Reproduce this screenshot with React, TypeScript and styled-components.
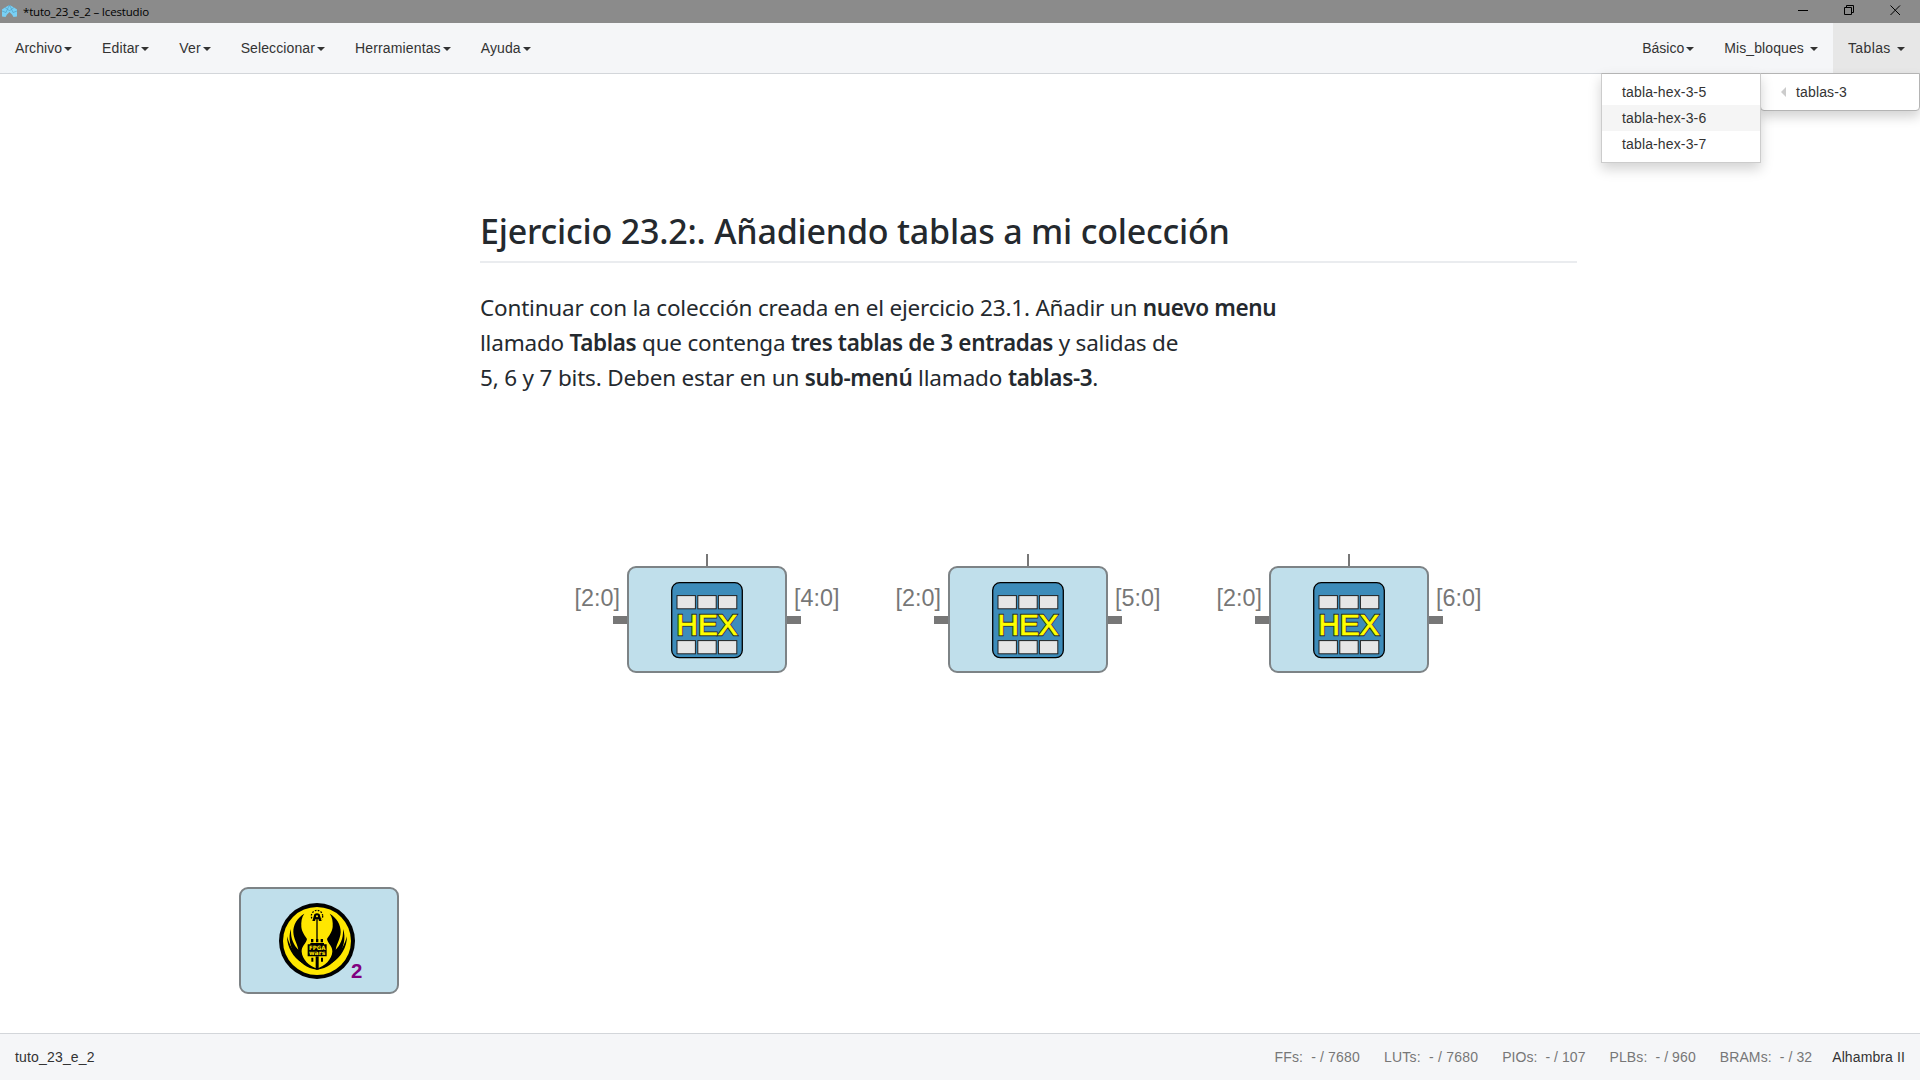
import React from "react";
import styled, { createGlobalStyle, css } from "styled-components";

const Global = createGlobalStyle`
  * { box-sizing: border-box; }
  html, body { margin: 0; padding: 0; background: #fff; overflow: hidden; }
  body { font: 14px/20px "Liberation Sans", Arial, sans-serif; color: #333; }
`;

const Window = styled.div`
  width: 1920px;
  height: 1080px;
  display: flex;
  flex-direction: column;
  background: #fff;
`;

const TitleBar = styled.header`
  flex: 0 0 23px;
  display: flex;
  align-items: center;
  background: #8b8b8b;
  color: #000;
  padding-left: 2px;
`;

const Title = styled.span`
  font: 11.5px/22px "Open Sans", "Noto Sans", sans-serif;
  letter-spacing: -0.18px;
  margin-left: 6px;
  flex: 1;
`;

const WindowButtons = styled.div`
  display: flex;
  margin-right: 2px;
`;

const WindowButton = styled.span`
  width: 46px;
  height: 23px;
  display: flex;
  svg { display: block; margin: 5px auto 0; }
`;

const NavBar = styled.nav`
  flex: 0 0 51px;
  display: flex;
  justify-content: space-between;
  background: #f5f6f8;
  border-bottom: 1px solid #d3d6da;
`;

const MenuGroup = styled.div`
  display: flex;
`;

const MenuItem = styled.div<{ $open?: boolean; $tracking?: number }>`
  position: relative;
  padding: 15px;
  height: 50px;
  white-space: pre;
  letter-spacing: ${(p) => p.$tracking ?? 0}px;
  ${(p) => p.$open && css`background: #e7e7e7;`}
`;

const Caret = styled.i`
  display: inline-block;
  margin-left: 2px;
  vertical-align: middle;
  border-top: 4px solid #333;
  border-left: 4px solid transparent;
  border-right: 4px solid transparent;
`;

const Dropdown = styled.div<{ $sub?: boolean }>`
  position: absolute;
  z-index: 5;
  top: ${(p) => (p.$sub ? "-1px" : "50px")};
  right: ${(p) => (p.$sub ? "158px" : "0")};
  width: 160px;
  padding: 5px 0;
  background: #fff;
  letter-spacing: 0.14px;
  border: 1px solid ${(p) => (p.$sub ? "#ccc" : "#b4b4b4")};
  border-top-color: #b4b4b4;
  border-radius: ${(p) => (p.$sub ? "0" : "0 0 4px 4px")};
  box-shadow: 0 6px 12px rgba(0, 0, 0, 0.175);
`;

const DropdownRow = styled.div<{ $hover?: boolean }>`
  padding: 3px 20px;
  display: flex;
  align-items: center;
  background: ${(p) => (p.$hover ? "#f5f5f5" : "transparent")};
`;

const LeftArrow = styled.i`
  margin-right: 10px;
  border-right: 5px solid #ccc;
  border-top: 5px solid transparent;
  border-bottom: 5px solid transparent;
`;

const Canvas = styled.main`
  flex: 1;
  position: relative;
`;

const Note = styled.article`
  position: absolute;
  left: 480px;
  top: 132px;
  width: 1097px;
  color: #24292e;
  font-family: "Noto Sans", "Open Sans", sans-serif;
`;

const Heading = styled.h2`
  margin: 0 0 27px;
  height: 57px;
  border-bottom: 2px solid #eaecef;
  font-size: 34px;
  font-weight: 540;
  line-height: 50px;
  white-space: nowrap;
`;

const Line = styled.p`
  margin: 0;
  font-size: 22.5px;
  line-height: 35px;
  white-space: nowrap;
`;

const Fit = styled.span<{ $spacing: number }>`
  letter-spacing: ${(p) => p.$spacing}px;
  b { font-weight: 600; letter-spacing: ${(p) => p.$spacing - 0.15}px; }
`;

const Node = styled.div<{ $x: number; $y: number }>`
  position: absolute;
  left: ${(p) => p.$x}px;
  top: ${(p) => p.$y}px;
  width: 160px;
  height: 107px;
  display: flex;
  align-items: center;
  justify-content: center;
  background: #c0dfeb;
  border: 2px solid #7d8386;
  border-radius: 9px;
`;

const TopPin = styled.i`
  position: absolute;
  left: 77px;
  top: -14px;
  width: 2px;
  height: 12px;
  background: #777;
`;

const Wire = styled.i<{ $side: "left" | "right" }>`
  position: absolute;
  ${(p) => p.$side}: -16px;
  top: 48px;
  width: 14px;
  height: 8px;
  background: #777;
`;

const PortLabel = styled.span<{ $side: "left" | "right" }>`
  position: absolute;
  ${(p) => (p.$side === "left" ? "right: 165px" : "left: 165px")};
  top: 16px;
  font-size: 23.33px;
  line-height: 28px;
  color: #777;
`;

const IconArt = styled.div<{ $right?: number; $top?: number }>`
  display: flex;
  margin-right: ${(p) => p.$right ?? 0}px;
  margin-top: ${(p) => p.$top ?? 0}px;
`;

const Count = styled.span`
  position: absolute;
  left: 110px;
  top: 70px;
  font-size: 20.4px;
  font-weight: bold;
  line-height: 24px;
  color: #800080;
`;

const StatusBar = styled.footer`
  flex: 0 0 47px;
  display: flex;
  align-items: center;
  justify-content: space-between;
  padding: 0 15px;
  background: #f5f6f8;
  border-top: 1px solid #d3d6da;
`;

const FileName = styled.span`
  letter-spacing: 0.17px;
`;

const Stats = styled.div`
  display: flex;
  letter-spacing: 0.11px;
`;

const Stat = styled.span<{ $tracking: number }>`
  margin-right: 24px;
  color: #777;
  white-space: pre;
  letter-spacing: ${(p) => p.$tracking}px;
  &:last-of-type { margin-right: 20px; }
`;

const Board = styled.strong`
  font-weight: normal;
`;

const AppIcon = () => (
  <svg width="15" height="13" viewBox="0 0 15 13">
    <path d="M0 4.5 3 2.5 7.5 0 12 2.5 15 4.5V11.5L11.5 12 10 9.5 7.5 7 5 9.5 3.5 12 0 11.5Z" fill="#79d0f5" />
    <path d="M3 2.5 5.5 4 7.5 0 9.5 4 12 2.5M0 6 4 7.5 5.5 4 7.5 6 9.5 4 11 7.5 15 6" fill="none" stroke="#458eb0" strokeWidth=".5" />
  </svg>
);

const HexIcon = () => (
  <svg width="72" height="77" viewBox="0 0 72 77">
    <rect x=".7" y=".7" width="70.6" height="75" rx="7.5" fill="#3d8cba" stroke="#000" strokeWidth="1.3" />
    {[13.6, 58.6].map((y) =>
      [6, 26.8, 47.4].map((x) => (
        <rect key={`${x}-${y}`} x={x} y={y} width="18.4" height="13.2" fill="#e6e6e6" stroke="#222" strokeWidth="1" />
      ))
    )}
    {[
      { color: "#222", width: 2.4 },
      { color: "#ff0", width: 0.7 },
    ].map((layer) => (
      <text
        key={layer.color}
        x="5.6"
        y="53"
        textLength="61"
        lengthAdjust="spacingAndGlyphs"
        fontFamily="Liberation Sans, Arial, sans-serif"
        fontSize="30"
        fill="#ff0"
        stroke={layer.color}
        strokeWidth={layer.width}
      >
        HEX
      </text>
    ))}
  </svg>
);

const FpgaWarsLogo = () => (
  <svg width="76" height="76" viewBox="6 6 228 228">
    <circle cx="120" cy="120" r="114" fill="#000" />
    <circle cx="120" cy="120" r="102" fill="#ffe600" />
    {[undefined, "translate(240 0) scale(-1 1)"].map((t, i) => (
      <g key={i} transform={t}>
        <path d="M82 38C62 50 48 70 49 94C50 114 60 126 64 146C52 134 40 114 42 84C32 110 40 142 58 166C68 184 88 203 121 206V203C96 194 76 176 74 152C73 136 87 128 90 114C84 104 75 94 73 78C72 62 74 48 82 38Z" />
        <path d="M30 106C30 138 48 170 76 186L92 190C64 172 40 144 30 106Z" />
      </g>
    ))}
    <circle cx="120" cy="45" r="17" fill="none" stroke="#000" strokeWidth="4" strokeDasharray="5 4" pathLength="107" />
    <path d="M104 54H136V68H104Z" fill="#ffe600" />
    <path d="M106 60 112 40Q120 34 128 40L134 60H126L124 54H116L114 60Z" />
    <circle cx="120" cy="46" r="3" fill="#ffe600" />
    <path d="M118 54H122V120H118Z" />
    <path d="M102 114H109V124H102ZM117 114H124V124H117ZM131 114H138V124H131Z" />
    <path d="M100 126H141V130H149V166H92V130H100Z" />
    <path d="M103 170H109V182H103ZM132 170H138V182H132Z" />
    <path d="M116 166H125V206H116Z" />
    <g fill="#ffe600" fontFamily="DejaVu Sans, sans-serif" fontWeight="bold" fontSize="18">
      <text x="96" y="146" textLength="49" lengthAdjust="spacingAndGlyphs">FPGA</text>
      <text x="96" y="162" textLength="49" lengthAdjust="spacingAndGlyphs">wars</text>
    </g>
  </svg>
);

const leftMenus: [string, number][] = [
  ["Archivo", 0.05],
  ["Editar", 0.12],
  ["Ver", 0.1],
  ["Seleccionar", 0.1],
  ["Herramientas", 0.15],
  ["Ayuda", 0.1],
];
const tables = ["tabla-hex-3-5", "tabla-hex-3-6", "tabla-hex-3-7"];
const blocks = [
  { x: 627, out: "[4:0]" },
  { x: 948, out: "[5:0]" },
  { x: 1269, out: "[6:0]" },
];
const stats: [string, number][] = [
  ["FFs:  - / 7680", 0.15],
  ["LUTs:  - / 7680", 0.22],
  ["PIOs:  - / 107", 0.06],
  ["PLBs:  - / 960", 0.1],
  ["BRAMs:  - / 32", 0.1],
];

export default function App() {
  return (
    <Window>
      <Global />
      <TitleBar>
        <AppIcon />
        <Title>*tuto_23_e_2 – Icestudio</Title>
        <WindowButtons>
          <WindowButton>
            <svg width="11" height="11"><path d="M0 5.5H10" stroke="#000" /></svg>
          </WindowButton>
          <WindowButton>
            <svg width="11" height="11"><path d="M.5 2.5H7.5V9.5H.5ZM2.5 2.5V.5H9.5V7.5H7.5" fill="none" stroke="#000" /></svg>
          </WindowButton>
          <WindowButton>
            <svg width="11" height="11"><path d="M.5 .5 10 10M10 .5.5 10" stroke="#000" /></svg>
          </WindowButton>
        </WindowButtons>
      </TitleBar>
      <NavBar>
        <MenuGroup>
          {leftMenus.map(([label, tracking]) => (
            <MenuItem key={label} $tracking={tracking}>{label}<Caret /></MenuItem>
          ))}
        </MenuGroup>
        <MenuGroup>
          <MenuItem>Básico<Caret /></MenuItem>
          <MenuItem $tracking={0.1}>{"Mis_bloques "}<Caret /></MenuItem>
          <MenuItem $open $tracking={0.38}>
            {"Tablas "}<Caret />
            <Dropdown>
              <DropdownRow><LeftArrow />tablas-3</DropdownRow>
              <Dropdown $sub>
                {tables.map((t, i) => (
                  <DropdownRow key={t} $hover={i === 1}>{t}</DropdownRow>
                ))}
              </Dropdown>
            </Dropdown>
          </MenuItem>
        </MenuGroup>
      </NavBar>
      <Canvas>
        <Note>
          <Heading><Fit $spacing={-0.2}>Ejercicio 23.2:. Añadiendo tablas a mi colección</Fit></Heading>
          <Line><Fit $spacing={-0.2}>Continuar con la colección creada en el ejercicio 23.1. Añadir un <b>nuevo menu</b></Fit></Line>
          <Line><Fit $spacing={-0.2}>llamado <b>Tablas</b> que contenga <b>tres tablas de 3 entradas</b> y salidas de</Fit></Line>
          <Line><Fit $spacing={-0.18}>5, 6 y 7 bits. Deben estar en un <b>sub-menú</b> llamado <b>tablas-3</b>.</Fit></Line>
        </Note>
        {blocks.map((b) => (
          <Node key={b.x} $x={b.x} $y={492}>
            <TopPin />
            <Wire $side="left" />
            <Wire $side="right" />
            <PortLabel $side="left">[2:0]</PortLabel>
            <PortLabel $side="right">{b.out}</PortLabel>
            <IconArt $top={2}><HexIcon /></IconArt>
          </Node>
        ))}
        <Node $x={239} $y={813}>
          <IconArt $right={4}><FpgaWarsLogo /></IconArt>
          <Count>2</Count>
        </Node>
      </Canvas>
      <StatusBar>
        <FileName>tuto_23_e_2</FileName>
        <Stats>
          {stats.map(([label, tracking]) => (
            <Stat key={label} $tracking={tracking}>{label}</Stat>
          ))}
          <Board>Alhambra II</Board>
        </Stats>
      </StatusBar>
    </Window>
  );
}
